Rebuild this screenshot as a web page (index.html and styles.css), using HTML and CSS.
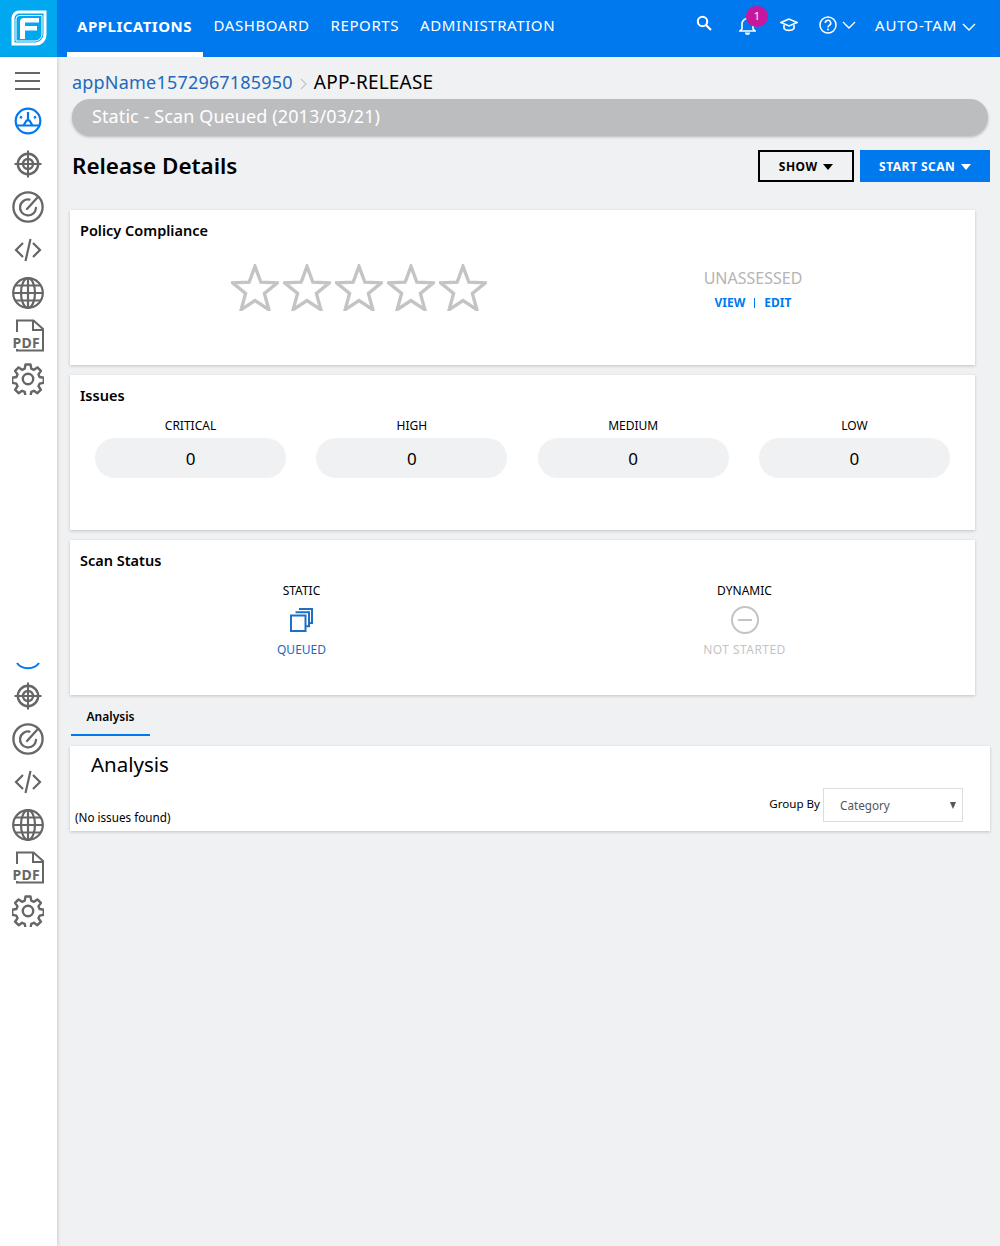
FILE: index.html
```html
<!DOCTYPE html>
<html lang="en">
<head>
    <meta charset="UTF-8">
    <meta name="viewport" content="width=device-width, initial-scale=1.0">
    <title>Release Details</title>
    <link rel="stylesheet" href="styles.css">
</head>
<body>
    <svg class="sprite" width="0" height="0">
        <symbol id="i-target" viewBox="0 0 28 28">
            <g fill="none" stroke="#666" stroke-width="2.400">
                <circle cx="14" cy="14" r="10.200"/>
                <circle cx="14" cy="14" r="5"/>
                <path d="M14 .5v27M.5 14h27" stroke-width="2"/>
            </g>
        </symbol>
        <symbol id="i-radar" viewBox="0 0 32 32">
            <g fill="none" stroke="#666" stroke-width="2.300" stroke-linecap="round">
                <circle cx="16" cy="16" r="14.600"/>
                <path d="M17.500 8.600A8 8 0 1 0 24 17"/>
                <path d="M15 18l10-11"/>
            </g>
        </symbol>
        <symbol id="i-code" viewBox="0 0 28 24">
            <g fill="none" stroke="#666" stroke-width="2.200">
                <path d="M9 5l-7 7 7 7M19 5l7 7-7 7"/>
                <path d="M16.500 1l-5 22"/>
            </g>
        </symbol>
        <symbol id="i-globe" viewBox="0 0 32 32">
            <g fill="none" stroke="#666" stroke-width="2.200">
                <circle cx="16" cy="16" r="14.800"/>
                <ellipse cx="16" cy="16" rx="7" ry="14.800"/>
                <path d="M16 1v30M1.200 16h29.600M3.500 8.500h25M3.500 23.500h25"/>
            </g>
        </symbol>
        <symbol id="i-pdf" viewBox="0 0 32 33">
            <g fill="none" stroke="#666" stroke-width="2">
                <path d="M5 13V1.500h16.500L31 10v21.500H5V28"/>
                <path d="M21 2v9h9.500"/>
            </g>
        </symbol>
        <symbol id="i-gear" viewBox="0 0 32 32">
            <g fill="none" stroke="#666" stroke-width="2.400" stroke-linejoin="round">
                <circle cx="16" cy="16" r="5.200"/>
                <path d="M13.500 1.500h5l.8 4.200 2.600 1.100 3.500-2.400 3.500 3.500-2.400 3.500 1.100 2.600 4.200.8v5l-4.200.8-1.100 2.600 2.400 3.500-3.500 3.500-3.500-2.400-2.600 1.100-.8 4.200h-5l-.8-4.200-2.600-1.100-3.500 2.400-3.500-3.500 2.400-3.500-1.100-2.600-4.200-.8v-5l4.200-.8 1.100-2.600-2.400-3.500 3.500-3.500 3.500 2.400 2.600-1.100z"/>
            </g>
        </symbol>
        <symbol id="i-star" viewBox="0 0 52 50" preserveAspectRatio="none">
            <path d="M26 2.500l6.300 16.800 18 .8-14.100 11.200 4.800 17.300L26 38.800 11 48.600l4.800-17.300L1.700 20.100l18-.8z" fill="none" stroke="#c4c4c4" stroke-width="3.600"/>
        </symbol>
    </svg>

    <header class="topbar">
        <a class="logo">
            <svg width="36" height="36" viewBox="0 0 36 36">
                <path d="M8 .5h27.500V25A10.500 10.500 0 0 1 25 35.500H.5V8A7.500 7.500 0 0 1 8 .5z" fill="#fff"/>
                <path d="M8.500 3.500h24V24a8.500 8.500 0 0 1-8.500 8.500H3.500v-24a5 5 0 0 1 5-5z" fill="#00a9ef"/>
                <path d="M5 31V9a3.500 3.500 0 0 1 3.500-3.500H31V24a7 7 0 0 1-7 7z" fill="none" stroke="#fff" stroke-width="1"/>
                <path d="M9 29V12a4 4 0 0 1 4-4h15v4.500H14V16h12v4.500H14V29z" fill="#fff"/>
            </svg>
        </a>
        <nav class="main-nav">
            <a class="active">APPLICATIONS</a>
            <a>DASHBOARD</a>
            <a>REPORTS</a>
            <a>ADMINISTRATION</a>
        </nav>
        <div class="top-tools">
            <svg class="tool-search" width="16" height="16" viewBox="0 0 16 16">
                <circle cx="6.500" cy="6.500" r="4.700" fill="none" stroke="#fff" stroke-width="2"/>
                <path d="M10 10l5 5" stroke="#fff" stroke-width="2.200"/>
            </svg>
            <span class="bell">
                <svg width="17" height="19" viewBox="0 0 17 19">
                    <path d="M3 13V8a5.500 5.500 0 0 1 11 0v5l2 2H1z" fill="none" stroke="#fff" stroke-width="1.600"/>
                    <path d="M6 16.500a2.500 2.500 0 0 0 5 0z" fill="#fff"/>
                </svg>
                <span class="badge">1</span>
            </span>
            <svg class="tool-hat" width="18" height="14" viewBox="0 0 18 14">
                <path d="M9 1L1 4.500 9 8l8-3.500z" fill="none" stroke="#fff" stroke-width="1.600"/>
                <path d="M4 7v3.500c2 2.500 8 2.500 10 0V7" fill="none" stroke="#fff" stroke-width="1.600"/>
            </svg>
            <span class="help">
                <svg width="18" height="18" viewBox="0 0 18 18">
                    <circle cx="9" cy="9" r="8" fill="none" stroke="#fff" stroke-width="1.500"/>
                    <path d="M6.300 7a2.700 2.700 0 1 1 4 2.400c-.9.500-1.300 1-1.300 2" fill="none" stroke="#fff" stroke-width="1.600"/>
                    <circle cx="9" cy="13.500" r="1" fill="#fff"/>
                </svg>
                <svg width="14" height="8" viewBox="0 0 14 8"><path d="M1 1l6 6 6-6" fill="none" stroke="#fff" stroke-width="1.400"/></svg>
            </span>
            <span class="user">AUTO-TAM
                <svg width="14" height="8" viewBox="0 0 14 8"><path d="M1 1l6 6 6-6" fill="none" stroke="#fff" stroke-width="1.400"/></svg>
            </span>
        </div>
    </header>

    <div class="page">
        <aside class="sidebar">
            <div class="side-hamburger"><span></span><span></span><span></span></div>
            <div class="side-item">
                <svg width="28" height="28" viewBox="0 0 28 28">
                    <g fill="none" stroke="#0079ef" stroke-width="2.200">
                        <circle cx="14" cy="14" r="12.300"/>
                        <path d="M2.500 18.500h23M9.500 18.500l3-5h3l3 5"/>
                        <path d="M14 5v8M6 9.500l2 1.500M22 9.500l-2 1.500"/>
                    </g>
                </svg>
            </div>
            <div class="side-item"><svg width="28" height="28"><use href="#i-target"/></svg></div>
            <div class="side-item"><svg width="32" height="32"><use href="#i-radar"/></svg></div>
            <div class="side-item"><svg width="28" height="24"><use href="#i-code"/></svg></div>
            <div class="side-item"><svg width="32" height="32"><use href="#i-globe"/></svg></div>
            <div class="side-item pdf"><svg width="32" height="33"><use href="#i-pdf"/></svg><span>PDF</span></div>
            <div class="side-item"><svg width="32" height="32"><use href="#i-gear"/></svg></div>

            <svg class="side-arc" width="24" height="8" viewBox="0 0 24 8">
                <path d="M1 1c5 7 17 7 22 0" fill="none" stroke="#0079ef" stroke-width="2"/>
            </svg>
            <div class="side-item"><svg width="28" height="28"><use href="#i-target"/></svg></div>
            <div class="side-item"><svg width="32" height="32"><use href="#i-radar"/></svg></div>
            <div class="side-item"><svg width="28" height="24"><use href="#i-code"/></svg></div>
            <div class="side-item"><svg width="32" height="32"><use href="#i-globe"/></svg></div>
            <div class="side-item pdf"><svg width="32" height="33"><use href="#i-pdf"/></svg><span>PDF</span></div>
            <div class="side-item"><svg width="32" height="32"><use href="#i-gear"/></svg></div>
        </aside>

        <main class="content">
            <div class="breadcrumb">
                <a>appName1572967185950</a>
                <svg width="8" height="12" viewBox="0 0 8 12"><path d="M1 1l5 5-5 5" fill="none" stroke="#c4c4c4" stroke-width="1.200"/></svg>
                <span>APP-RELEASE</span>
            </div>
            <div class="status-pill">Static - Scan Queued (2013/03/21)</div>
            <div class="title-row">
                <h1>Release Details</h1>
                <div class="title-actions">
                    <button class="btn btn-outline">SHOW <i class="caret"></i></button>
                    <button class="btn btn-primary">START SCAN <i class="caret"></i></button>
                </div>
            </div>

            <section class="card">
                <h2>Policy Compliance</h2>
                <div class="policy">
                    <div class="stars">
                        <svg width="48" height="47"><use href="#i-star"/></svg>
                        <svg width="48" height="47"><use href="#i-star"/></svg>
                        <svg width="48" height="47"><use href="#i-star"/></svg>
                        <svg width="48" height="47"><use href="#i-star"/></svg>
                        <svg width="48" height="47"><use href="#i-star"/></svg>
                    </div>
                    <div class="assess">
                        <div class="assess-state">UNASSESSED</div>
                        <div class="assess-links"><a>VIEW</a><a>EDIT</a></div>
                    </div>
                </div>
            </section>

            <section class="card">
                <h2>Issues</h2>
                <div class="issues">
                    <div class="issue"><label>CRITICAL</label><div class="count">0</div></div>
                    <div class="issue"><label>HIGH</label><div class="count">0</div></div>
                    <div class="issue"><label>MEDIUM</label><div class="count">0</div></div>
                    <div class="issue"><label>LOW</label><div class="count">0</div></div>
                </div>
            </section>

            <section class="card">
                <h2>Scan Status</h2>
                <div class="scans">
                    <div class="scan">
                        <label>STATIC</label>
                        <svg width="26" height="26" viewBox="0 0 26 26">
                            <g fill="#fff" stroke="#1f6fc4" stroke-width="2">
                                <path d="M10 2h13v14h-4"/>
                                <path d="M6.500 5.200H20v14h-4"/>
                                <rect x="2" y="8.500" width="14.500" height="15.500"/>
                            </g>
                        </svg>
                        <div class="scan-state queued">QUEUED</div>
                    </div>
                    <div class="scan">
                        <label>DYNAMIC</label>
                        <svg width="28" height="28" viewBox="0 0 28 28">
                            <circle cx="14" cy="14" r="13" fill="none" stroke="#c4c4c4" stroke-width="2"/>
                            <path d="M7 14h14" stroke="#c4c4c4" stroke-width="2"/>
                        </svg>
                        <div class="scan-state">NOT STARTED</div>
                    </div>
                </div>
            </section>

            <div class="tabs"><a class="tab active">Analysis</a></div>

            <section class="analysis">
                <h3>Analysis</h3>
                <div class="analysis-foot">
                    <span class="no-issues">(No issues found)</span>
                    <div class="group-by">
                        <label>Group By</label>
                        <div class="select">Category<i></i></div>
                    </div>
                </div>
            </section>
        </main>
    </div>
</body>
</html>
```

FILE: styles.css
```css
* {
    box-sizing: border-box;
}

body {
    margin: 0;
    height: 1246px;
    overflow: hidden;
    font-family: "Noto Sans", sans-serif;
    background-color: #f0f1f3;
    color: #000;
}

.sprite {
    position: absolute;
}

/* top bar */
.topbar {
    display: flex;
    height: 57px;
    background-color: #0079ef;
    color: #fff;
}

.logo {
    width: 57px;
    height: 57px;
    display: flex;
    align-items: center;
    justify-content: center;
    background-color: #00a9ef;
    padding-bottom: 1px;
}

.main-nav {
    display: flex;
    margin-left: 10px;
}

.main-nav a {
    height: 57px;
    padding: 16px 10.500px 0;
    font-size: 15px;
    line-height: 19px;
    letter-spacing: .6px;
}

.main-nav a.active {
    border-bottom: 5px solid #fff;
    font-weight: 700;
    letter-spacing: .5px;
    width: 136px;
    padding: 17px 0 0 10px;
}

.top-tools {
    margin-left: auto;
    display: flex;
    align-items: center;
    height: 50px;
    padding-right: 24px;
}

.tool-search {
    margin-right: 27px;
    margin-bottom: 4px;
}

.bell {
    position: relative;
    display: flex;
    margin-right: 24px;
}

.badge {
    position: absolute;
    left: 7px;
    top: -10px;
    width: 22px;
    height: 21px;
    border-radius: 50%;
    background-color: #c6179d;
    font-size: 11px;
    line-height: 20px;
    text-align: center;
}

.tool-hat {
    margin-right: 21px;
}

.help {
    display: flex;
    align-items: center;
    gap: 5px;
    margin-right: 19px;
}

.user {
    font-size: 15px;
    letter-spacing: .9px;
}

/* sidebar */
.page {
    display: flex;
    height: 1189px;
}

.sidebar {
    width: 57px;
    flex: none;
    background-color: #fff;
    box-shadow: 1px 0 3px rgba(0, 0, 0, .15);
    display: flex;
    flex-direction: column;
    align-items: center;
    padding: 15px 2px 0 0;
}

.side-hamburger {
    width: 25px;
    height: 18px;
    display: flex;
    flex-direction: column;
    justify-content: space-between;
    margin-bottom: 9px;
}

.side-hamburger span {
    height: 2px;
    background-color: #666;
}

.side-item {
    height: 43px;
    display: flex;
    align-items: center;
    justify-content: center;
    position: relative;
}

.side-item.pdf span {
    position: absolute;
    left: 0;
    top: 22px;
    padding: 0 1px;
    background-color: #fff;
    font-size: 14px;
    line-height: 13px;
    font-weight: 700;
    letter-spacing: .3px;
    color: #666;
}

.side-arc {
    margin-top: 262px;
    margin-bottom: 4px;
}

/* content */
.content {
    flex: 1;
    padding: 14px 10px 0 13px;
}

.breadcrumb {
    display: flex;
    align-items: center;
    padding-left: 2px;
    height: 22px;
    font-size: 18px;
}

.breadcrumb a {
    color: #2269bd;
    letter-spacing: .2px;
}

.breadcrumb span {
    font-size: 19px;
    letter-spacing: .2px;
}

.breadcrumb svg {
    margin: 4px 6px 0 7px;
}

.status-pill {
    height: 36px;
    margin: 6px 2px 0;
    padding-left: 20px;
    border-radius: 18px;
    background-color: #bcbdbf;
    box-shadow: 0 2px 3px rgba(0, 0, 0, .25);
    color: #fff;
    font-size: 18px;
    letter-spacing: .1px;
    line-height: 35px;
}

.title-row {
    display: flex;
    justify-content: space-between;
    height: 32px;
    margin: 15px 0 28px 2px;
}

h1 {
    margin: 0;
    font-size: 22.400px;
    line-height: 31px;
    font-weight: 600;
}

.title-actions {
    display: flex;
    gap: 6px;
}

.btn {
    height: 32px;
    font-family: inherit;
    font-size: 12px;
    font-weight: 700;
    letter-spacing: .5px;
    padding: 0;
    border-radius: 0;
}

.btn-outline {
    width: 96px;
    background: transparent;
    border: 2px solid #000;
    color: #000;
}

.btn-primary {
    width: 130px;
    background-color: #0079ef;
    border: none;
    color: #fff;
}

.caret {
    display: inline-block;
    margin-left: 2px;
    vertical-align: 1px;
    border-left: 5.500px solid transparent;
    border-right: 5.500px solid transparent;
    border-top: 6px solid currentColor;
}

.card {
    width: 905px;
    height: 155px;
    margin-bottom: 10px;
    padding: 10px;
    background-color: #fff;
    box-shadow: 0 1px 3px rgba(0, 0, 0, .2);
}

h2 {
    margin: 0;
    font-size: 14.500px;
    line-height: 20px;
    font-weight: 600;
}

.policy {
    display: flex;
}

.stars {
    display: flex;
    gap: 4px;
    height: 47px;
    margin: 24px 0 0 151px;
}

.assess {
    margin: 28px 0 0 176px;
    width: 180px;
    text-align: center;
}

.assess-state {
    font-size: 16px;
    line-height: 20px;
    color: #b4b4b4;
}

.assess-links {
    display: flex;
    justify-content: center;
    margin-top: 7px;
    font-size: 12px;
    line-height: 16px;
    font-weight: 700;
    color: #0079ef;
}

.assess-links a {
    padding: 0 9px;
}

.assess-links a + a {
    border-left: 1px solid #0079ef;
    line-height: 10px;
    height: 10px;
    margin-top: 3px;
}

.issues {
    display: grid;
    grid-template-columns: repeat(4, 191px);
    justify-content: space-between;
    margin: 13px 15px 0;
}

.issue {
    text-align: center;
}

label {
    display: block;
    font-size: 12px;
    line-height: 16px;
}

.count {
    height: 40px;
    margin-top: 4px;
    border-radius: 20px;
    background-color: #f0f1f3;
    font-size: 17px;
    line-height: 41px;
}

.scans {
    display: grid;
    grid-template-columns: 443px 443px;
    margin-top: 13px;
}

.scan {
    display: flex;
    flex-direction: column;
    align-items: center;
    height: 76px;
}

.scan svg {
    margin-top: 7px;
    height: 28px;
}

.scan-state {
    margin-top: 8px;
    font-size: 12px;
    line-height: 16px;
    letter-spacing: .45px;
    color: #c4c4c4;
}

.scan-state.queued {
    letter-spacing: 0;
    color: #2269bd;
}

.tabs {
    display: flex;
    height: 31px;
    margin-left: 1px;
}

.tab {
    width: 79px;
    text-align: center;
    padding-top: 4px;
    font-size: 12px;
    line-height: 16px;
    font-weight: 600;
    border-bottom: 2px solid #0079ef;
}

.analysis {
    height: 85px;
    margin-top: 10px;
    background-color: #fff;
    box-shadow: 0 1px 3px rgba(0, 0, 0, .2);
}

h3 {
    margin: 0;
    padding: 4px 0 0 21px;
    font-size: 20.500px;
    line-height: 28px;
    font-weight: 400;
}

.analysis-foot {
    display: flex;
    justify-content: space-between;
    align-items: flex-end;
    padding: 0 27px 0 5px;
    margin-top: 10px;
}

.no-issues {
    font-size: 11.700px;
    line-height: 16px;
    margin-bottom: -3px;
}

.group-by {
    display: flex;
    align-items: flex-start;
    gap: 3px;
}

.group-by label {
    font-size: 11.600px;
    margin-top: 8px;
}

.select {
    width: 140px;
    height: 34px;
    padding-left: 16px;
    border: 1px solid #ddd;
    font-size: 11.700px;
    line-height: 32px;
    color: #555;
    position: relative;
}

.select i {
    position: absolute;
    right: 6px;
    top: 13px;
    border-left: 3px solid transparent;
    border-right: 3px solid transparent;
    border-top: 7px solid #555;
}
```
